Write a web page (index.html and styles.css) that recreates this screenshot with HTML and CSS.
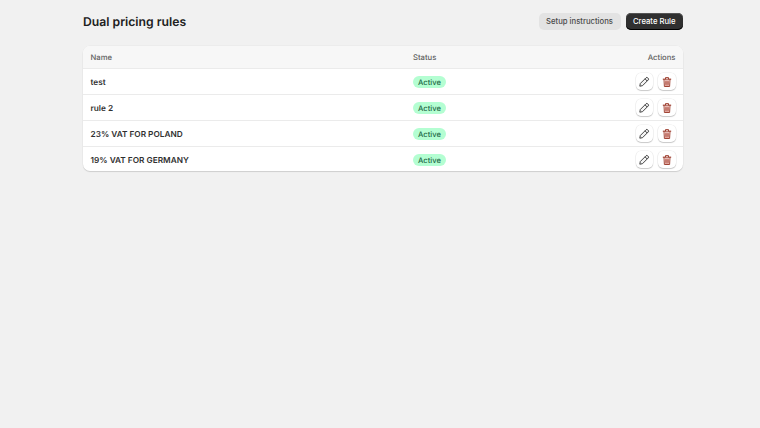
FILE: index.html
```html
<!DOCTYPE html>
<html lang="en">
<head>
<meta charset="utf-8">
<title>Dual pricing rules</title>
<link rel="stylesheet" href="styles.css">
</head>
<body>
<main class="page">
  <header class="page-header">
    <h1 class="title">Dual pricing rules</h1>
    <div class="header-actions">
      <button class="btn btn-secondary">Setup instructions</button>
      <button class="btn btn-primary">Create Rule</button>
    </div>
  </header>
  <section class="card">
    <div class="row head">
      <div class="c-name">Name</div>
      <div class="c-status">Status</div>
      <div class="c-actions">Actions</div>
    </div>
    <div class="row">
      <div class="c-name strong">test</div>
      <div class="c-status"><span class="badge">Active</span></div>
      <div class="c-actions">
        <button class="icon-btn"><svg class="icon" viewBox="0 0 12 12"><path class="edit" d="M8 1.800a1.200 1.200 0 0 1 1.700 0l.5.5a1.200 1.200 0 0 1 0 1.700L4.500 9.700 1.800 10.200l.5-2.700zM7 2.800l2.200 2.200"/></svg></button>
        <button class="icon-btn"><svg class="icon" viewBox="0 0 12 12"><path class="trash" d="M2.200 3.200h7.600M4.500 3V1.600h3V3M3 3.200l.4 7.300h5.200L9 3.200"/><path class="trash-fill" d="M3.800 4.300h4.400l-.3 5.600H4.100z"/><path class="trash-bar" d="M5 5.300v3.500M7 5.300v3.500"/></svg></button>
      </div>
    </div>
    <div class="row">
      <div class="c-name strong">rule 2</div>
      <div class="c-status"><span class="badge">Active</span></div>
      <div class="c-actions">
        <button class="icon-btn"><svg class="icon" viewBox="0 0 12 12"><path class="edit" d="M8 1.800a1.200 1.200 0 0 1 1.700 0l.5.5a1.200 1.200 0 0 1 0 1.700L4.500 9.700 1.800 10.200l.5-2.700zM7 2.800l2.200 2.200"/></svg></button>
        <button class="icon-btn"><svg class="icon" viewBox="0 0 12 12"><path class="trash" d="M2.200 3.200h7.600M4.500 3V1.600h3V3M3 3.200l.4 7.300h5.200L9 3.200"/><path class="trash-fill" d="M3.800 4.300h4.400l-.3 5.600H4.100z"/><path class="trash-bar" d="M5 5.300v3.500M7 5.300v3.500"/></svg></button>
      </div>
    </div>
    <div class="row">
      <div class="c-name strong">23% VAT FOR POLAND</div>
      <div class="c-status"><span class="badge">Active</span></div>
      <div class="c-actions">
        <button class="icon-btn"><svg class="icon" viewBox="0 0 12 12"><path class="edit" d="M8 1.800a1.200 1.200 0 0 1 1.700 0l.5.5a1.200 1.200 0 0 1 0 1.700L4.500 9.700 1.800 10.200l.5-2.700zM7 2.800l2.200 2.200"/></svg></button>
        <button class="icon-btn"><svg class="icon" viewBox="0 0 12 12"><path class="trash" d="M2.200 3.200h7.600M4.500 3V1.600h3V3M3 3.200l.4 7.300h5.200L9 3.200"/><path class="trash-fill" d="M3.800 4.300h4.400l-.3 5.600H4.100z"/><path class="trash-bar" d="M5 5.300v3.500M7 5.300v3.500"/></svg></button>
      </div>
    </div>
    <div class="row row-last">
      <div class="c-name strong">19% VAT FOR GERMANY</div>
      <div class="c-status"><span class="badge">Active</span></div>
      <div class="c-actions">
        <button class="icon-btn"><svg class="icon" viewBox="0 0 12 12"><path class="edit" d="M8 1.800a1.200 1.200 0 0 1 1.700 0l.5.5a1.200 1.200 0 0 1 0 1.700L4.500 9.700 1.800 10.200l.5-2.700zM7 2.800l2.200 2.200"/></svg></button>
        <button class="icon-btn"><svg class="icon" viewBox="0 0 12 12"><path class="trash" d="M2.200 3.200h7.600M4.500 3V1.600h3V3M3 3.200l.4 7.300h5.200L9 3.200"/><path class="trash-fill" d="M3.800 4.300h4.400l-.3 5.600H4.100z"/><path class="trash-bar" d="M5 5.300v3.500M7 5.300v3.500"/></svg></button>
      </div>
    </div>
  </section>
</main>
</body>
</html>
```
FILE: styles.css
```css
* { box-sizing: border-box; }
html, body { margin: 0; height: 100%; }
body {
  background: #f1f1f1;
  color: #303030;
  font-family: Inter, "Liberation Sans", sans-serif;
  font-size: 7.700px;
  text-rendering: geometricPrecision;
}
.page { width: 600px; margin-left: 83px; padding-top: 12px; }
.page-header {
  display: flex;
  align-items: center;
  justify-content: space-between;
  height: 19px;
  margin-bottom: 15px;
}
.title { margin: 0; font-size: 12.200px; line-height: 19px; font-weight: 600; color: #202020; }
.header-actions { display: flex; align-items: center; gap: 5px; }
button { font-family: inherit; cursor: pointer; }
.btn {
  height: 17.500px;
  padding: 0;
  border: 0;
  border-radius: 5px;
  font-size: 7.700px;
  font-weight: 550;
}
.btn-secondary { width: 82px; background: #e3e3e3; color: #4a4a4a; }
.btn-primary {
  width: 57.500px;
  background: #303030;
  color: #fff;
  box-shadow: inset 0 -1px 0 #000, inset 0 1px 0 #555;
}
.card {
  background: #fff;
  border-radius: 7px;
  overflow: hidden;
  box-shadow: 0 1px 1px rgba(0,0,0,.13), 0 0 0 .5px rgba(0,0,0,.04);
}
.row {
  display: grid;
  grid-template-columns: 322.500px 1fr 90px;
  align-items: center;
  height: 26px;
  padding: 0 7.500px;
  border-top: 1px solid #ebebeb;
}
.row.head {
  height: 22px;
  border-top: 0;
  background: #f7f7f7;
  color: #616161;
  font-weight: 500;
}
.row.row-last { margin-bottom: -1px; }
.strong { font-size: 8.250px; font-weight: 600; color: #303030; }
.c-status { display: flex; align-items: center; }
.head .c-status { display: block; }
.c-actions { display: flex; justify-content: flex-end; align-items: center; gap: 5px; }
.badge {
  display: flex;
  align-items: center;
  height: 12.500px;
  margin-top: 1px;
  padding: 0 5px;
  border-radius: 6px;
  background: #b4fed2;
  color: #1f6a48;
  font-size: 7.600px;
  font-weight: 450;
}
.icon-btn {
  display: flex;
  align-items: center;
  justify-content: center;
  width: 17.500px;
  height: 17px;
  padding: 0;
  border: 0;
  border-radius: 5px;
  background: #fff;
  box-shadow: 0 1px 1px rgba(0,0,0,.18), 0 0 0 .5px rgba(0,0,0,.08);
}
.icon { width: 12px; height: 12px; }
.edit { fill: #f3f3f3; stroke: #3a3a3a; stroke-width: .95; stroke-linejoin: round; }
.trash { fill: none; stroke: #96301f; stroke-width: .9; stroke-linejoin: round; stroke-linecap: round; }
.trash-fill { fill: #dfa39b; }
.trash-bar { fill: none; stroke: #96301f; stroke-width: .7; }
```
